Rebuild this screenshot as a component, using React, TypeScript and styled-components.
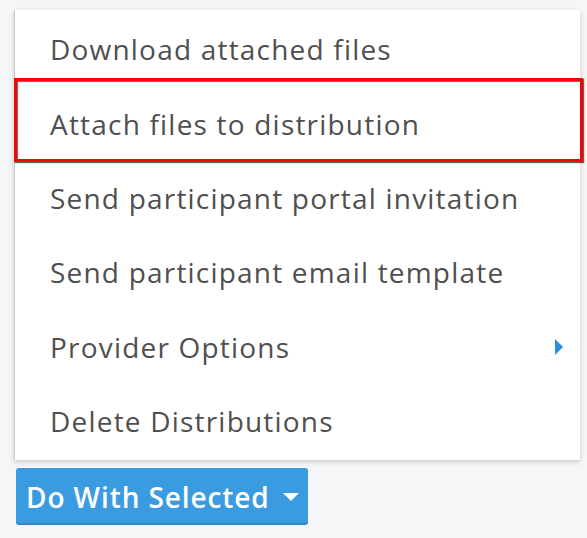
import React from 'react'
import styled, { createGlobalStyle } from 'styled-components'

const GlobalStyle = createGlobalStyle`
  html, body {
    margin: 0;
    padding: 0;
    background: #f5f6f8;
    font-family: 'Open Sans', 'Noto Sans', sans-serif;
  }
`

const Page = styled.div`
  width: 587px;
  height: 538px;
  overflow: hidden;
  display: flex;
  flex-direction: column;
  padding: 10px 0 0 14px;
  box-sizing: border-box;
`

const Menu = styled.ul`
  list-style: none;
  margin: 0;
  padding: 2px 0 0;
  width: 566px;
  height: 450px;
  box-sizing: border-box;
  background: #fff;
  border-left: 1px solid #c9cacc;
  box-shadow: 0 2px 5px rgba(0, 0, 0, 0.18);
`

const Item = styled.li<{ $highlighted?: boolean }>`
  position: relative;
  height: 74.4px;
  display: flex;
  align-items: center;
  justify-content: space-between;
  padding: 0 20px 0 35px;
  font-size: 28px;
  font-weight: 500;
  letter-spacing: 1.2px;
  color: #4f4f4f;
  cursor: pointer;

  ${(p) =>
    p.$highlighted &&
    `
    &::after {
      content: '';
      position: absolute;
      left: -1px;
      right: -3px;
      top: -8px;
      bottom: -1px;
      border: 3px solid #ff0000;
      box-shadow: inset 1px 1px 1px rgba(0,0,0,0.6), 1px 1px 1px rgba(0,0,0,0.6);
    }
  `}
`

const Arrow = styled.span`
  width: 0;
  height: 0;
  border-top: 8px solid transparent;
  border-bottom: 8px solid transparent;
  border-left: 8px solid #2b8fdc;
  margin-right: -3px;
`

const Button = styled.button`
  margin: 8px 0 0 2px;
  width: 292px;
  height: 57px;
  display: flex;
  align-items: center;
  gap: 13px;
  padding: 0 0 0 10px;
  border: none;
  border-radius: 3px;
  background: #3a9be0;
  box-shadow: inset 0 -2px 0 rgba(0, 0, 0, 0.12);
  color: #fff;
  font-family: 'Open Sans', 'Noto Sans', sans-serif;
  font-weight: 600;
  font-size: 28px;
  letter-spacing: 0.9px;
  cursor: pointer;
`

const Caret = styled.span`
  width: 0;
  height: 0;
  border-left: 8px solid transparent;
  border-right: 8px solid transparent;
  border-top: 8px solid #fff;
`

const items = [
  'Download attached files',
  'Attach files to distribution',
  'Send participant portal invitation',
  'Send participant email template',
  'Provider Options',
  'Delete Distributions',
]

export default function App() {
  return (
    <Page>
      <GlobalStyle />
      <Menu>
        {items.map((label, i) => (
          <Item key={label} $highlighted={i === 1}>
            <span>{label}</span>
            {label === 'Provider Options' && <Arrow />}
          </Item>
        ))}
      </Menu>
      <Button>
        Do With Selected
        <Caret />
      </Button>
    </Page>
  )
}
